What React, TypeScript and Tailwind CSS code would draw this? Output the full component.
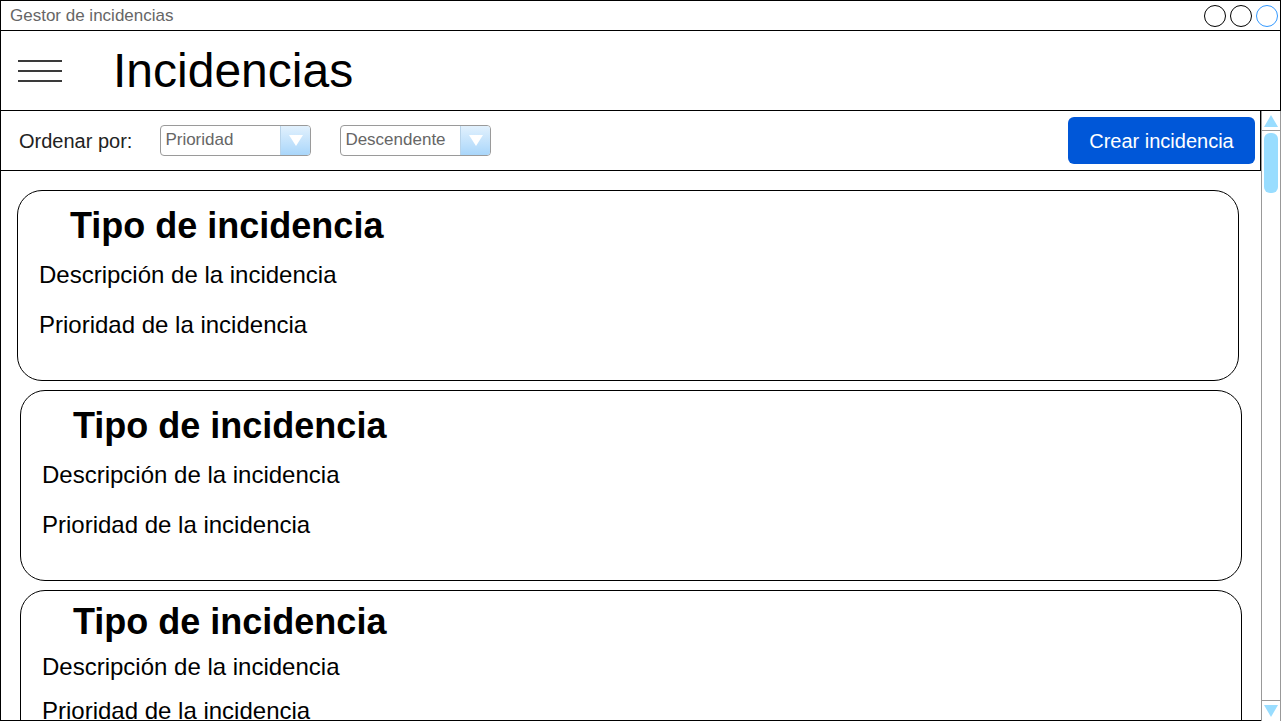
import React from "react";

function Select({ label }: { label: string }) {
  return (
    <div className="flex h-[31px] w-[151px] items-stretch overflow-hidden rounded-[4px] border border-[#9a9a9a] bg-white">
      <div className="flex flex-1 items-center pl-[4px] pb-[2px] text-[17px] leading-none text-[#666]">{label}</div>
      <div className="flex w-[30px] items-center justify-center border-l border-[#b9d4ea] bg-gradient-to-b from-[#e2f1fd] to-[#a9d6fa]">
        <svg width="14" height="11" viewBox="0 0 14 11">
          <polygon points="0,0 14,0 7,11" fill="#ffffff" />
        </svg>
      </div>
    </div>
  );
}

function Card({
  ml,
  pt,
  g1,
  g2,
}: {
  ml: string;
  pt: string;
  g1: string;
  g2: string;
}) {
  return (
    <div className={`${ml} ${pt} flex h-[191px] w-[1222px] shrink-0 flex-col rounded-[25px] border border-black bg-white`}>
      <div className="h-[40px] pl-[52px] text-[36px] font-bold leading-[40px] text-black">Tipo de incidencia</div>
      <div className={`${g1} h-[30px] pl-[21px] text-[24px] leading-[30px] text-black`}>Descripción de la incidencia</div>
      <div className={`${g2} h-[30px] pl-[21px] text-[24px] leading-[30px] text-black`}>Prioridad de la incidencia</div>
    </div>
  );
}

export default function App() {
  return (
    <div className="h-[727px] w-[1281px] bg-white font-['Liberation_Sans',Arial,sans-serif]">
      <div className="flex h-[721px] w-[1281px] flex-col border border-black">
        {/* title bar */}
        <div className="flex h-[30px] shrink-0 items-center justify-between border-b border-black">
          <span className="pl-[9px] text-[17px] leading-none text-[#666]">Gestor de incidencias</span>
          <div className="mr-[2px] flex gap-[4px]">
            <div className="h-[22px] w-[22px] rounded-full border-[1.5px] border-black" />
            <div className="h-[22px] w-[22px] rounded-full border-[1.5px] border-black" />
            <div className="h-[22px] w-[22px] rounded-full border-[1.5px] border-[#3399ff]" />
          </div>
        </div>
        {/* header */}
        <div className="flex h-[80px] shrink-0 items-center border-b border-black">
          <div className="ml-[17px] flex w-[44px] flex-col gap-[8px]">
            <div className="h-[2px] bg-[#3a3a3a]" />
            <div className="h-[2px] bg-[#3a3a3a]" />
            <div className="h-[2px] bg-[#3a3a3a]" />
          </div>
          <span className="ml-[51px] text-[48px] leading-none text-black">Incidencias</span>
        </div>
        {/* body */}
        <div className="flex min-h-0 flex-1">
          <div className="flex min-w-0 flex-1 flex-col">
            <div className="flex h-[60px] shrink-0 items-center border-r border-b border-black">
              <span className="ml-[18px] text-[20px] leading-none text-[#222]">Ordenar por:</span>
              <div className="ml-[28px]">
                <Select label="Prioridad" />
              </div>
              <div className="ml-[29px]">
                <Select label="Descendente" />
              </div>
              <div className="flex-1" />
              <button className="mr-[5px] flex h-[47px] w-[187px] items-center justify-center rounded-[6px] bg-[#0057d8] text-[20px] text-white">
                Crear incidencia
              </button>
            </div>
            <div className="flex min-h-0 flex-1 flex-col gap-[9px] overflow-hidden pt-[19px]">
              <Card ml="ml-[16px]" pt="pt-[15px]" g1="mt-[14px]" g2="mt-[20px]" />
              <Card ml="ml-[19px]" pt="pt-[15px]" g1="mt-[14px]" g2="mt-[20px]" />
              <Card ml="ml-[19px]" pt="pt-[11px]" g1="mt-[10px]" g2="mt-[14px]" />
            </div>
          </div>
          {/* scrollbar */}
          <div className="-mr-px -mb-px flex w-[20px] shrink-0 flex-col border-x border-[#999] bg-white">
            <div className="flex h-[20px] shrink-0 items-center justify-center border-b border-[#999]">
              <svg width="14" height="12" viewBox="0 0 14 12">
                <polygon points="7,0 14,12 0,12" fill="#99ddff" />
              </svg>
            </div>
            <div className="mx-auto mt-[2px] h-[60px] w-[14px] rounded-[6px] bg-[#99ddff]" />
            <div className="flex-1" />
            <div className="flex h-[21px] shrink-0 items-center justify-center border-t border-[#999]">
              <svg width="14" height="12" viewBox="0 0 14 12">
                <polygon points="0,0 14,0 7,12" fill="#99ddff" />
              </svg>
            </div>
          </div>
        </div>
      </div>
    </div>
  );
}
